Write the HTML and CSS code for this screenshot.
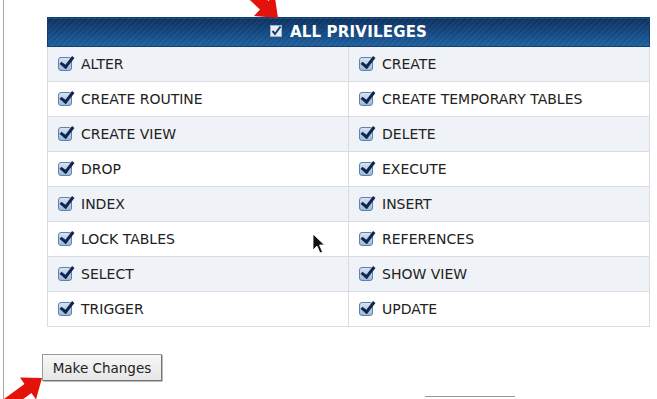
FILE: index.html
```html
<!DOCTYPE html>
<html>
<head>
<meta charset="utf-8">
<link rel="stylesheet" href="styles.css">
</head>
<body>
<div class="page">
  <table class="privs">
    <thead>
      <tr><th colspan="2"><span class="hcb"><svg viewBox="0 0 12 12" width="12" height="12"><rect x="0.5" y="0.5" width="11" height="11" fill="#e8eef6" stroke="#9fb4cc"/><path d="M2.5 6 L5 9 L10.5 1.5" fill="none" stroke="#1a3d6a" stroke-width="2"/></svg></span>ALL PRIVILEGES</th></tr>
    </thead>
    <tbody>
      <tr class="odd"><td><span class="cb"></span>ALTER</td><td><span class="cb"></span>CREATE</td></tr>
      <tr><td><span class="cb"></span>CREATE ROUTINE</td><td><span class="cb"></span>CREATE TEMPORARY TABLES</td></tr>
      <tr class="odd"><td><span class="cb"></span>CREATE VIEW</td><td><span class="cb"></span>DELETE</td></tr>
      <tr><td><span class="cb"></span>DROP</td><td><span class="cb"></span>EXECUTE</td></tr>
      <tr class="odd"><td><span class="cb"></span>INDEX</td><td><span class="cb"></span>INSERT</td></tr>
      <tr><td><span class="cb"></span>LOCK TABLES</td><td><span class="cb"></span>REFERENCES</td></tr>
      <tr class="odd"><td><span class="cb"></span>SELECT</td><td><span class="cb"></span>SHOW VIEW</td></tr>
      <tr><td><span class="cb"></span>TRIGGER</td><td><span class="cb"></span>UPDATE</td></tr>
    </tbody>
  </table>
  <button class="btn">Make Changes</button>
  <div class="ghost"></div>
</div>
<svg class="overlay" width="657" height="399" viewBox="0 0 657 399">
  <path d="M236 -13 L260 9.5 L254 16 L278 18 L274.5 -5.5 L268.5 1 L244 -21 Z" fill="#e3120b"/>
  <path d="M-7 407 L24.5 384 L20 377.5 L42 378 L36 399.5 L31.5 393 L0 416 Z" fill="#e3120b"/>
  <path d="M313 234 L313 250 L317 246 L320 253 L322.5 252 L319.5 245 L324.5 245 Z" fill="#111" stroke="#fff" stroke-width="0.8"/>
</svg>
</body>
</html>
```
FILE: styles.css
```css
html, body { margin: 0; padding: 0; background: #fff; }
body { width: 657px; height: 399px; overflow: hidden; position: relative; font-family: "DejaVu Sans", Verdana, sans-serif; }
.page { margin-left: 3px; border-left: 1px solid #a8a8a8; height: 399px; padding-top: 17px; box-sizing: border-box; }
.privs { margin-left: 43px; width: 603px; border-collapse: collapse; border: 1px solid #d9dde3; }
.privs th { height: 28px; padding: 0; color: #fff; font-size: 15px; font-weight: bold; letter-spacing: 0.2px; text-align: center; background: repeating-linear-gradient(135deg, rgba(255,255,255,0.05) 0 2px, rgba(255,255,255,0) 2px 4px), linear-gradient(#0b2f5c, #134b85 60%, #1d5e9c); border: 1px solid #103e70; }
.hcb { display: inline-block; vertical-align: 0; margin-right: 8px; line-height: 0; }
.privs td { height: 35px; padding: 0 0 0 10px; font-size: 14px; color: #222; border: 1px solid #d9dde3; width: 50%; box-sizing: border-box; white-space: nowrap; }
.privs tr.odd td { background: #eff2f7; }
.cb { display: inline-block; width: 14px; height: 14px; vertical-align: -2px; margin-right: 9px; border-radius: 3px; border: 1px solid #5f82ad; background: linear-gradient(#d6e3f3, #9db9dc); position: relative; box-sizing: border-box; }
.cb::after { content: ""; position: absolute; left: 3.5px; top: -4px; width: 5px; height: 11px; border: solid #10264a; border-width: 0 3px 3px 0; transform: rotate(38deg); }
.btn { margin: 27px 0 0 38px; height: 27px; width: 120px; padding: 0; font-family: "DejaVu Sans", Verdana, sans-serif; font-size: 13.5px; color: #222; background: linear-gradient(#f7f7f7, #e6e6e6); border: 1px solid #9a9a9a; border-right-color: #777; border-bottom-color: #777; border-radius: 1px; box-shadow: 1px 1px 0 #bbb; display: block; }
.ghost { position: absolute; left: 425px; top: 396px; width: 90px; height: 3px; border-top: 1px solid #999; }
.overlay { position: absolute; left: 0; top: 0; pointer-events: none; }
```
